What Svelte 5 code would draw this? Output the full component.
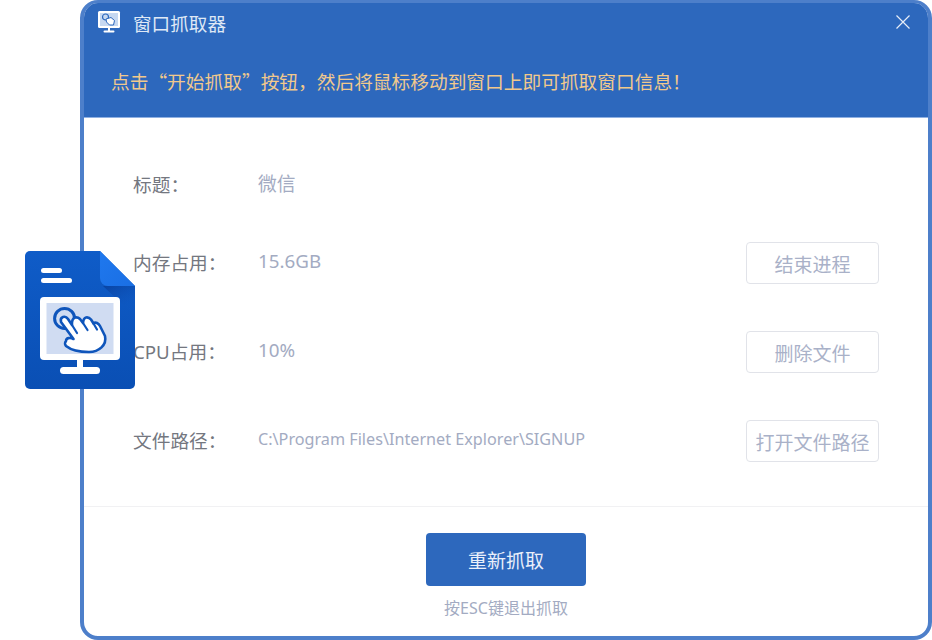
<script>
  // Full-width punctuation used by the Chinese copy
  const colon = '\uFF1A';
  const hint = '点击“开始抓取”按钮\uFF0C然后将鼠标移动到窗口上即可抓取窗口信息\uFF01';

  // Rows of the window info panel
  const rows = [
    { label: '标题' + colon, value: '微信' },
    { label: '内存占用' + colon, value: '15.6GB', action: '结束进程' },
    { label: 'CPU占用' + colon, value: '10%', action: '删除文件' },
    { label: '文件路径' + colon, value: 'C:\\Program Files\\Internet Explorer\\SIGNUP', action: '打开文件路径', small: true }
  ];
</script>

<div class="page">
  <div class="window">
    <header class="head">
      <div class="titlebar">
        <svg class="app-icon" viewBox="0 0 24 22" width="24" height="22">
          <rect x="1" y="0" width="22" height="17" rx="1.500" fill="#fff"/>
          <rect x="3" y="2" width="18" height="13" fill="#c6d8f1"/>
          <circle cx="8.500" cy="6" r="3" fill="none" stroke="#2d68bd" stroke-width="1.200"/>
          <path d="M9 8l5-1.500 3.500 3-1 4.500h-4l-3-3z" fill="#fff" stroke="#2d68bd" stroke-width="1"/>
          <rect x="11" y="17" width="2" height="3" fill="#fff"/>
          <rect x="6.500" y="19.500" width="11" height="2" rx="1" fill="#fff"/>
        </svg>
        <span class="title">窗口抓取器</span>
        <svg class="close" viewBox="0 0 14 14" width="14" height="14">
          <path d="M0.500 0.500l13 13M13.500 0.500l-13 13" stroke="#e6edf8" stroke-width="1.200" fill="none"/>
        </svg>
      </div>
      <p class="hint">{hint}</p>
    </header>

    <main class="body">
      {#each rows as row}
        <div class="row">
          <span class="label">{row.label}</span>
          <span class="value" class:small={row.small}>{row.value}</span>
          {#if row.action}
            <button class="action">{row.action}</button>
          {/if}
        </div>
      {/each}
    </main>

    <footer class="foot">
      <button class="primary">重新抓取</button>
      <span class="esc">按ESC键退出抓取</span>
    </footer>
  </div>

  <!-- Floating document badge over the window edge -->
  <svg class="badge" viewBox="0 0 110 138" width="110" height="138">
    <defs>
      <linearGradient id="doc" x1="0" y1="0" x2="0" y2="1">
        <stop offset="0" stop-color="#0f5cc8"/>
        <stop offset="1" stop-color="#0a4fb4"/>
      </linearGradient>
      <linearGradient id="fold" x1="0" y1="0" x2="1" y2="1">
        <stop offset="0" stop-color="#1f78ee"/>
        <stop offset="1" stop-color="#1a6fe4"/>
      </linearGradient>
      <linearGradient id="shade" x1="0" y1="0" x2="0.500" y2="1">
        <stop offset="0" stop-color="#083f9c" stop-opacity="0.850"/>
        <stop offset="1" stop-color="#0f5cc8" stop-opacity="0"/>
      </linearGradient>
    </defs>
    <path d="M5 0h70l35 35v98a5 5 0 0 1-5 5H5a5 5 0 0 1-5-5V5a5 5 0 0 1 5-5z" fill="url(#doc)"/>
    <path d="M78 35h32v30z" fill="url(#shade)"/>
    <path d="M75 0l35 35H83a8 8 0 0 1-8-8z" fill="url(#fold)"/>
    <rect x="16" y="17" width="21" height="5" rx="2.500" fill="#fff"/>
    <rect x="16" y="27" width="31" height="5" rx="2.500" fill="#fff"/>
    <rect x="15" y="46" width="80" height="63" rx="4" fill="#fff"/>
    <rect x="21.500" y="52" width="67" height="51" fill="#d0dcf2"/>
    <rect x="52" y="109" width="6" height="8" fill="#fff"/>
    <rect x="35" y="116" width="40" height="7" rx="3.500" fill="#fff"/>
    <!-- pointing hand with touch ring -->
    <circle cx="39.600" cy="67.400" r="10" fill="#d0dcf2" stroke="#0f55bb" stroke-width="3"/>
    <path d="M41 90C41 87 45 86 48.500 88L36 71Q35 67 38 66Q41 65 43 68L47 74Q46.500 68 50 66.500Q53 66 55 68L58 72Q58.500 67 61 66.500Q64 66 66 68.500L68.500 72.500Q70 71 72 72Q74 73 75 75L80 85C82 94 74 101 64 101C55 101 46 99 41 95C39.500 93.500 40 91 41 90Z" fill="#fff" stroke="#0f55bb" stroke-width="2.600" stroke-linejoin="round"/>
    <path d="M47 74l5 8M58 72l4.500 7M68.500 72.500l3.500 6" stroke="#0f55bb" stroke-width="2.200" stroke-linecap="round" fill="none"/>
  </svg>
</div>

<style>
  :global(body) {
    margin: 0;
    background: #fff;
  }

  .page {
    position: relative;
    width: 932px;
    height: 640px;
    padding-left: 80px;
    box-sizing: border-box;
    overflow: hidden;
    font-family: "Noto Sans", "Noto Sans CJK SC", sans-serif;
  }

  .window {
    height: 640px;
    box-sizing: border-box;
    display: flex;
    flex-direction: column;
    border: 4px solid #4d7fca;
    border-top-width: 3px;
    border-radius: 18px;
    overflow: hidden;
    background: #fff;
  }

  .head {
    height: 115px;
    flex: none;
    box-sizing: border-box;
    background: #2d68bd;
    border-bottom: 1px solid #8fb0e2;
  }

  .titlebar {
    display: flex;
    align-items: center;
    height: 38px;
    padding: 0 18px 0 13px;
  }

  .title {
    margin-left: 12px;
    flex: 1;
    font-size: 18.600px;
    color: #dfe8f6;
  }

  .hint {
    margin: 0;
    padding: 26px 0 0 27px;
    font-family: "Noto Sans CJK SC", sans-serif;
    font-size: 18.720px;
    line-height: 28px;
    color: #f1c98c;
    white-space: nowrap;
  }

  .body {
    flex: 1;
    display: flex;
    flex-direction: column;
    padding: 46px 49px 0;
    gap: 47px;
  }

  .row {
    height: 42px;
    display: flex;
    align-items: center;
  }

  .row:first-child {
    margin-bottom: -11px;
  }

  .label {
    width: 125px;
    flex: none;
    font-size: 18.700px;
    color: #74777f;
    margin-top: -4px;
  }

  .value {
    flex: 1;
    font-size: 18.800px;
    color: #a3abc2;
    margin-top: -4px;
  }

  .value.small {
    font-size: 16.200px;
  }

  .action {
    width: 133px;
    height: 42px;
    padding: 1px 0 0;
    box-sizing: border-box;
    background: #fff;
    border: 1px solid #e1e3e9;
    border-radius: 4px;
    font: inherit;
    font-size: 19px;
    color: #a9b1c8;
  }

  .foot {
    height: 130px;
    flex: none;
    box-sizing: border-box;
    border-top: 1px solid #f1f1f3;
    display: flex;
    flex-direction: column;
    align-items: center;
    padding-top: 26px;
  }

  .primary {
    width: 160px;
    height: 53px;
    border: none;
    border-radius: 4px;
    background: #2d68bd;
    color: #e9effa;
    font: inherit;
    font-size: 19px;
  }

  .esc {
    margin-top: 11px;
    font-size: 16px;
    line-height: 22px;
    color: #a3abc2;
  }

  .badge {
    position: absolute;
    left: 25px;
    top: 251px;
  }
</style>
